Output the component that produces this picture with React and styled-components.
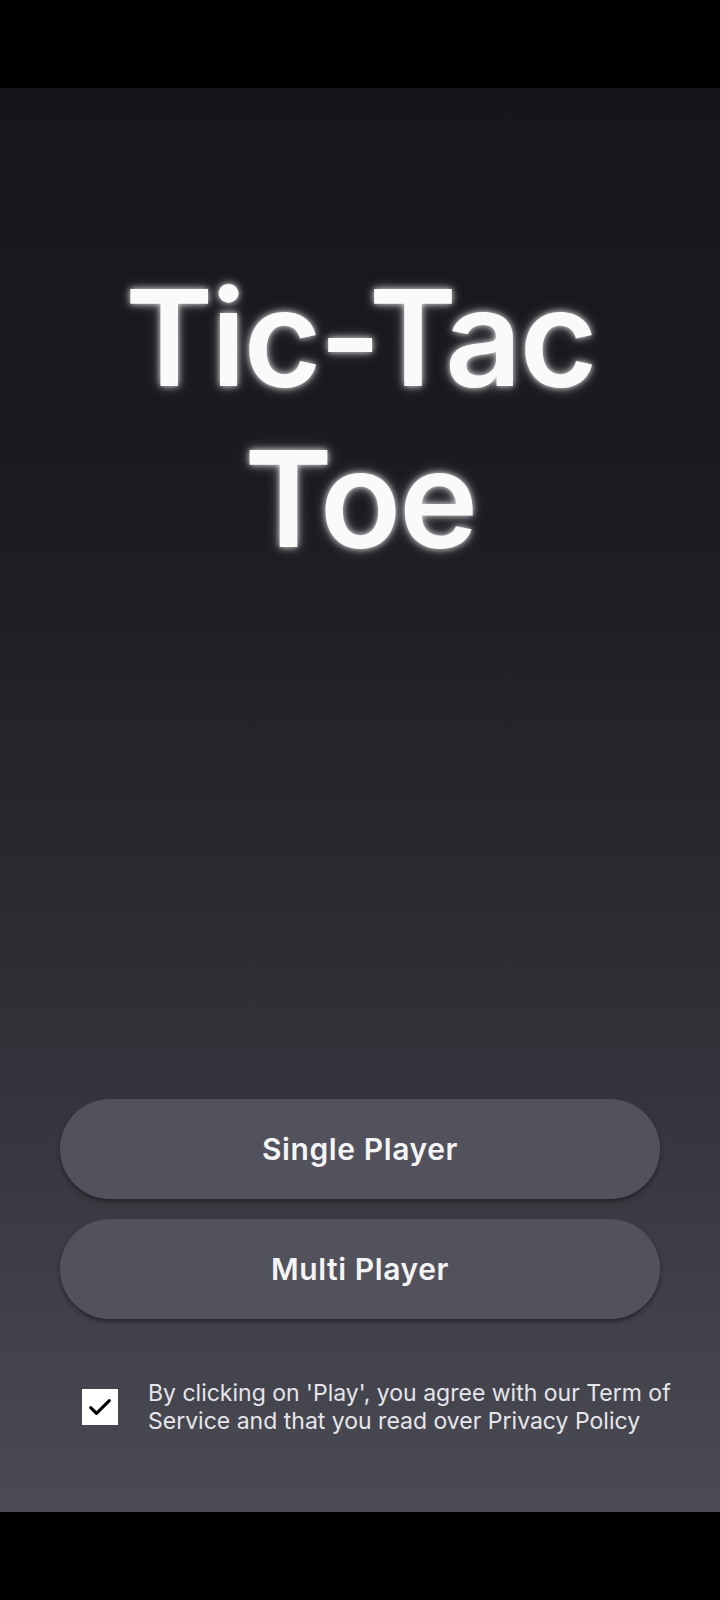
import React, { useState } from 'react';
import styled, { createGlobalStyle } from 'styled-components';

const GlobalStyle = createGlobalStyle`
  html, body {
    margin: 0;
    padding: 0;
    background: #000;
  }
  * {
    box-sizing: border-box;
  }
`;

const Screen = styled.div`
  width: 720px;
  height: 1600px;
  display: flex;
  flex-direction: column;
  background: #000;
  font-family: Inter, 'Noto Sans', sans-serif;
`;

const SystemBar = styled.div`
  height: ${(p) => p.h}px;
  background: #000;
  flex-shrink: 0;
`;

const Main = styled.main`
  flex: 1;
  display: flex;
  flex-direction: column;
  background: linear-gradient(180deg, #15151b 0%, #1b1b21 30%, #2c2c33 60%, #4b4b55 100%);
`;

const Title = styled.h1`
  margin: 169px 0 0;
  text-align: center;
  font-family: Inter, 'Noto Sans', sans-serif;
  font-weight: 600;
  font-size: 134px;
  line-height: 161px;
  letter-spacing: -2.5px;
  color: #fafafa;
  text-shadow: 0 0 6px rgba(255, 255, 255, 0.85), 0 0 14px rgba(255, 255, 255, 0.35);
`;

const Buttons = styled.div`
  margin-top: auto;
  padding: 0 60px;
  display: flex;
  flex-direction: column;
  gap: 20px;
`;

const MenuButton = styled.button`
  height: 100px;
  border: none;
  border-radius: 50px;
  background: #52525c;
  color: #f4f4f4;
  font-family: Inter, 'Noto Sans', sans-serif;
  font-size: 30px;
  font-weight: 600;
  letter-spacing: 0.6px;
  cursor: pointer;
  box-shadow: 0 3px 4px rgba(20, 20, 26, 0.55);
`;

const Consent = styled.label`
  margin: 60px 0 0;
  padding: 0 30px 77px 82px;
  display: flex;
  align-items: center;
  gap: 30px;
  cursor: pointer;
`;

const Box = styled.span`
  width: 36px;
  height: 36px;
  flex-shrink: 0;
  background: #fff;
  display: flex;
  align-items: center;
  justify-content: center;
`;

const ConsentText = styled.p`
  margin: 0;
  font-size: 23px;
  line-height: 28px;
  color: #e6e6ea;
  white-space: nowrap;
`;

const Check = () => (
  <svg width="28" height="28" viewBox="0 0 24 24" fill="none" stroke="#000" strokeWidth="2.6" strokeLinecap="round" strokeLinejoin="round">
    <path d="M4 12.5l5 5L20 6.5" />
  </svg>
);

export default function App() {
  const [agreed, setAgreed] = useState(true);

  return (
    <>
      <GlobalStyle />
      <Screen>
        <SystemBar h={88} />
        <Main>
          <Title>
            Tic-Tac
            <br />
            Toe
          </Title>
          <Buttons>
            <MenuButton>Single Player</MenuButton>
            <MenuButton>Multi Player</MenuButton>
          </Buttons>
          <Consent onClick={() => setAgreed(!agreed)}>
            <Box>{agreed && <Check />}</Box>
            <ConsentText>
              By clicking on 'Play', you agree with our Term of
              <br />
              Service and that you read over Privacy Policy
            </ConsentText>
          </Consent>
        </Main>
        <SystemBar h={88} />
      </Screen>
    </>
  );
}
